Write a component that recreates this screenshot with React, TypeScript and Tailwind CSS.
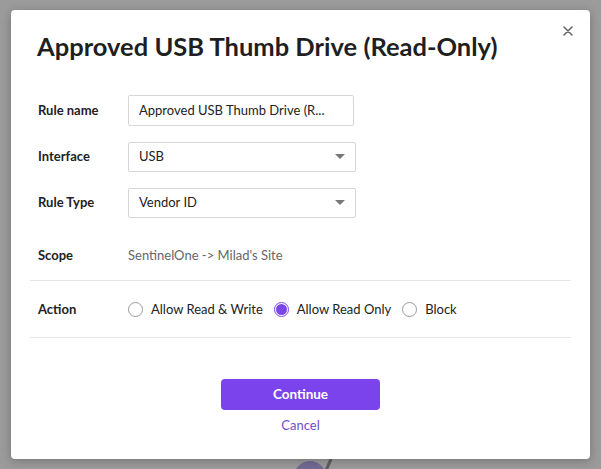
import { useState } from 'react';

type Action = 'rw' | 'ro' | 'block';

const actions: Array<{ id: Action; label: string }> = [
  { id: 'rw', label: 'Allow Read & Write' },
  { id: 'ro', label: 'Allow Read Only' },
  { id: 'block', label: 'Block' },
];

export default function App() {
  const [action, setAction] = useState<Action>('ro');

  return (
    <div className="relative h-[469px] w-[601px] overflow-hidden bg-[#9b9b9b] pl-[11px] pt-[10px] font-['Lato',sans-serif] text-[#222]">
      {/* page content peeking out under the overlay */}
      <svg className="absolute left-[290px] top-[455px]" width="60" height="20" viewBox="0 0 60 20">
        <circle cx="20" cy="22" r="16" fill="#726a94" />
        <path d="M34 20 L41 4" stroke="#5d5d5d" strokeWidth="3" />
      </svg>

      <div className="relative h-[449px] w-[579px] rounded-[4px] bg-white shadow-[0_2px_10px_rgba(0,0,0,0.25)]">
        <button type="button" className="absolute right-[16px] top-[15px] flex h-[12px] w-[12px] items-center justify-center">
          <svg width="10" height="10" viewBox="0 0 10 10">
            <path d="M1 1 L9 9 M9 1 L1 9" stroke="#666" strokeWidth="1.6" strokeLinecap="round" />
          </svg>
        </button>

        <h2 className="pl-[26px] pt-[21px] text-[25.5px] font-bold leading-[30px] text-[#1f1f1f]">Approved USB Thumb Drive (Read-Only)</h2>

        <div className="mt-[34px] px-[19px]">
          <div className="flex flex-col gap-[16px] pl-[8px]">
            <FieldRow label="Rule name">
              <div className="flex h-[31px] w-[226px] items-center rounded-[2px] border border-[#d6d6d6] px-[10px] text-[13px]">
                Approved USB Thumb Drive (R...
              </div>
            </FieldRow>
            <FieldRow label="Interface">
              <SelectBox value="USB" />
            </FieldRow>
            <FieldRow label="Rule Type">
              <SelectBox value="Vendor ID" />
            </FieldRow>
          </div>

          <div className="mt-[28px] pl-[8px]">
            <FieldRow label="Scope">
              <span className="text-[13px] text-[#666]">SentinelOne -&gt; Milad's Site</span>
            </FieldRow>
          </div>

          <div className="mt-[14px] flex h-[58px] items-center border-y border-[#e6e6e6] pl-[8px] pt-[2px]">
            <span className="w-[90px] shrink-0 text-[13px] font-bold">Action</span>
            <div className="flex items-center">
              {actions.map((item) => (
                <label key={item.id} className="mr-[11px] flex cursor-pointer items-center gap-[8px] text-[13px]" onClick={() => setAction(item.id)}>
                  <span
                    className={
                      action === item.id
                        ? 'flex h-[15px] w-[15px] items-center justify-center rounded-full border border-[#7b46e8] bg-white'
                        : 'h-[15px] w-[15px] rounded-full border border-[#9a9a9a] bg-white'
                    }
                  >
                    {action === item.id ? <span className="h-[11px] w-[11px] rounded-full bg-[#7b46e8]" /> : null}
                  </span>
                  {item.label}
                </label>
              ))}
            </div>
          </div>
        </div>

        <div className="mt-[41px] flex flex-col items-center">
          <button type="button" className="h-[31px] w-[159px] rounded-[4px] bg-[#7a43ec] text-[13.5px] font-bold text-white">
            Continue
          </button>
          <button type="button" className="mt-[6px] text-[13px] text-[#6e4fc8]">
            Cancel
          </button>
        </div>
      </div>
    </div>
  );
}

function FieldRow({ label, children }: { label: string; children: React.ReactNode }) {
  return (
    <div className="flex items-center">
      <span className="w-[90px] shrink-0 text-[13px] font-bold">{label}</span>
      {children}
    </div>
  );
}

function SelectBox({ value }: { value: string }) {
  return (
    <div className="flex h-[30px] w-[228px] items-center justify-between rounded-[2px] border border-[#d6d6d6] pl-[10px] pr-[10px] text-[13px]">
      <span>{value}</span>
      <svg width="10" height="6" viewBox="0 0 10 6">
        <path d="M0 0 L10 0 L5 5 Z" fill="#777" />
      </svg>
    </div>
  );
}
